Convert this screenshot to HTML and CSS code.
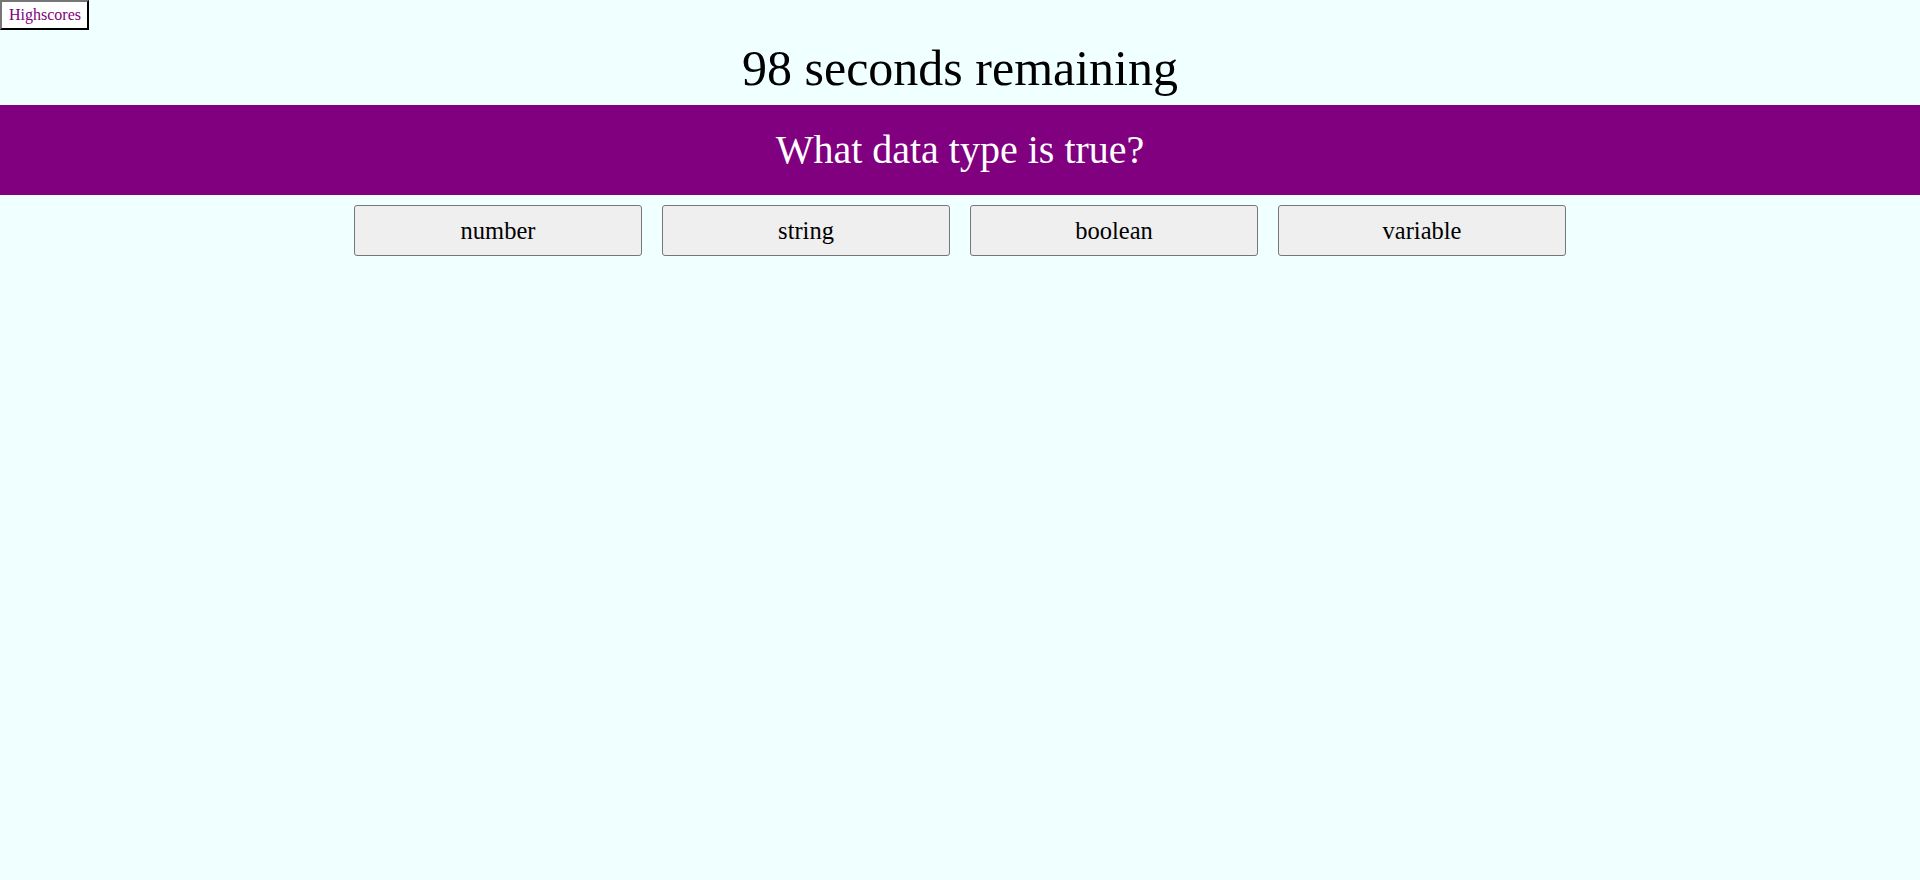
FILE: index.html
```html
<!DOCTYPE html>
<html lang="en">
<head>
<meta charset="utf-8">
<title>Quiz</title>
<link rel="stylesheet" href="styles.css">
</head>
<body>
<nav class="topbar">
  <a class="highscores" href="#">Highscores</a>
</nav>
<h1 class="timer">98 seconds remaining</h1>
<section class="question">
  <h2 class="question-text">What data type is true?</h2>
</section>
<div class="answers">
  <button class="answer">number</button>
  <button class="answer">string</button>
  <button class="answer">boolean</button>
  <button class="answer">variable</button>
</div>
</body>
</html>
```

FILE: styles.css
```css
html, body {
  margin: 0;
  padding: 0;
  background: #f0ffff;
  font-family: "Liberation Serif", "Times New Roman", serif;
  color: #000;
}

.topbar {
  display: flex;
  height: 29px;
}

.highscores {
  display: inline-block;
  box-sizing: border-box;
  height: 30px;
  padding: 4px 6px 0 7px;
  background: #fff;
  color: #800080;
  font-size: 16px;
  text-decoration: none;
  border: 2px outset #767676;
  border-color: #767676 #222 #222 #767676;
}

.timer {
  margin: 11px 0 8px 0;
  font-size: 50px;
  font-weight: normal;
  text-align: center;
  line-height: 57px;
}

.question {
  background: #800080;
  padding: 22px 0 22px 0;
}

.question-text {
  margin: 0;
  color: #fff;
  font-size: 40px;
  font-weight: normal;
  line-height: 46px;
  text-align: center;
}

.answers {
  display: flex;
  justify-content: center;
  gap: 20px;
  margin-top: 10px;
}

.answer {
  width: 288px;
  height: 51px;
  box-sizing: border-box;
  background: #efefef;
  border: 1px solid #767676;
  border-radius: 3px;
  font-family: "Liberation Serif", "Times New Roman", serif;
  font-size: 24.5px;
  color: #000;
  padding: 0;
}
```
